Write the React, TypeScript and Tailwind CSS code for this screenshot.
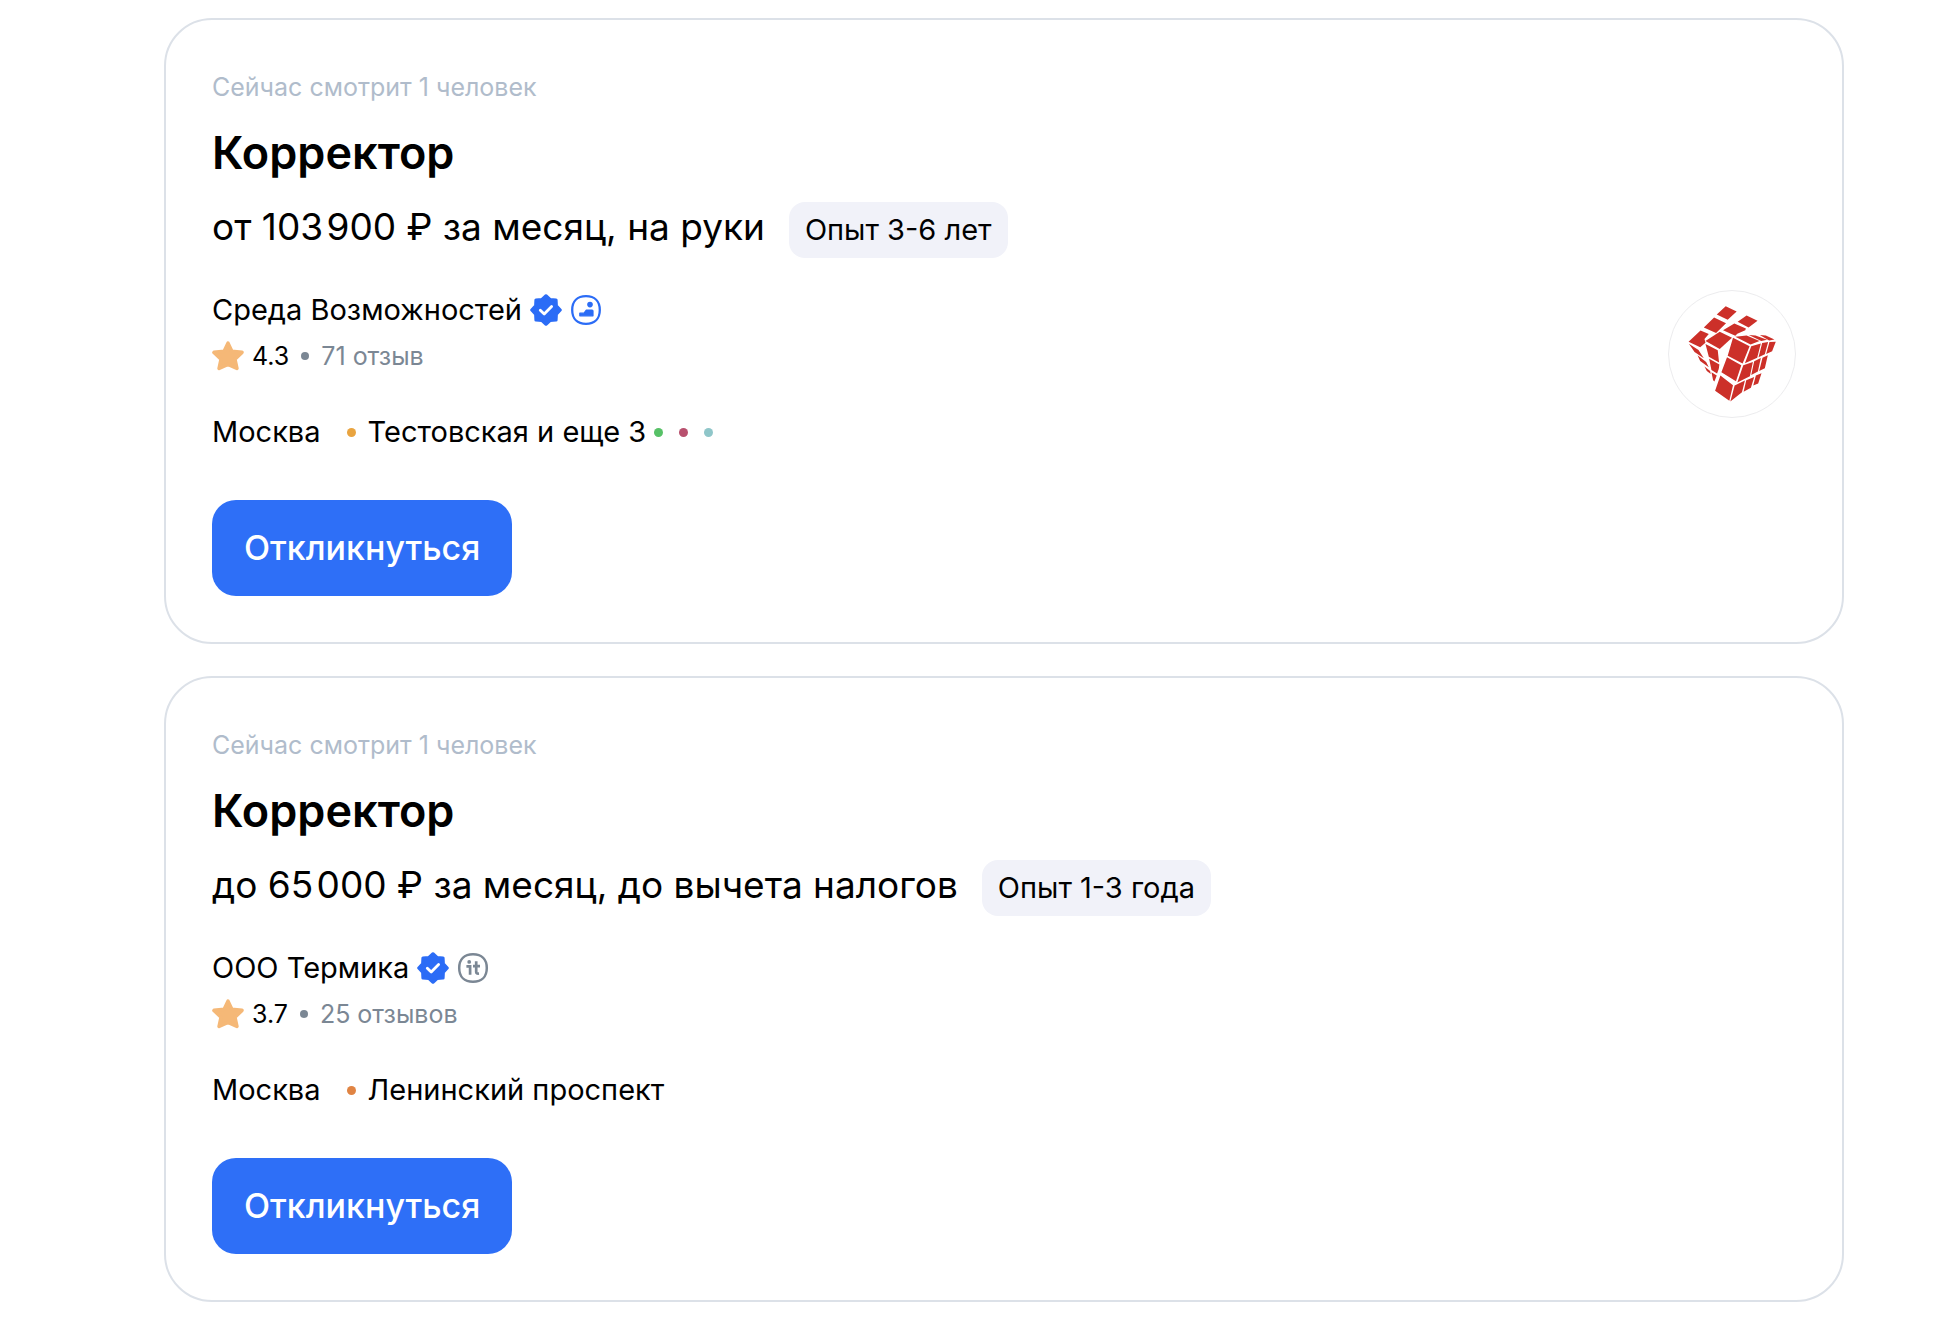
interface Vacancy {
  id: number
  viewers: string
  title: string
  salary: string
  experience: string
  company: string
  badge: 'career' | 'it'
  rating: string
  reviews: string
  city: string
  metro: string
  metroColor: string
  moreColors: string[]
  hasLogo: boolean
}

const vacancies: Vacancy[] = [
  {
    id: 1,
    viewers: 'Сейчас смотрит 1 человек',
    title: 'Корректор',
    salary: 'от 103\u200A900 ₽ за месяц, на руки',
    experience: 'Опыт 3-6 лет',
    company: 'Среда Возможностей',
    badge: 'career',
    rating: '4.3',
    reviews: '71 отзыв',
    city: 'Москва',
    metro: 'Тестовская и еще 3',
    metroColor: 'bg-[#e9a440]',
    moreColors: ['bg-[#57c167]', 'bg-[#b8506e]', 'bg-[#8fc6c9]'],
    hasLogo: true,
  },
  {
    id: 2,
    viewers: 'Сейчас смотрит 1 человек',
    title: 'Корректор',
    salary: 'до 65\u200A000 ₽ за месяц, до вычета налогов',
    experience: 'Опыт 1-3 года',
    company: 'ООО Термика',
    badge: 'it',
    rating: '3.7',
    reviews: '25 отзывов',
    city: 'Москва',
    metro: 'Ленинский проспект',
    metroColor: 'bg-[#e08443]',
    moreColors: [],
    hasLogo: false,
  },
]

function VerifiedIcon() {
  return (
    <svg viewBox="0 0 32 32" className="size-8 shrink-0" aria-hidden="true">
      <path
        fill="#2b6cf6"
        stroke="#2b6cf6"
        strokeWidth="3"
        strokeLinejoin="round"
        d="M16 1.7 20.3 5.6 26.1 5.9 26.4 11.7 30.3 16 26.4 20.3 26.1 26.1 20.3 26.4 16 30.3 11.7 26.4 5.9 26.1 5.6 20.3 1.7 16 5.6 11.7 5.9 5.9 11.7 5.6Z"
      />
      <path
        fill="none"
        stroke="#fff"
        strokeWidth="2.8"
        strokeLinecap="round"
        strokeLinejoin="round"
        d="m10.3 16.2 3.9 3.9 7.4-7.6"
      />
    </svg>
  )
}

function CareerIcon() {
  return (
    <svg viewBox="0 0 32 32" className="size-8 shrink-0" aria-hidden="true">
      <path
        fill="none"
        stroke="#2b6cf6"
        strokeWidth="2.3"
        d="M16 2.2c8.6 0 13.8 5.2 13.8 13.8S24.6 29.8 16 29.8 2.2 24.6 2.2 16 7.4 2.2 16 2.2Z"
      />
      <circle cx="20" cy="10.6" r="2.8" fill="#2b6cf6" />
      <path
        fill="#2b6cf6"
        stroke="#2b6cf6"
        strokeWidth="1.2"
        strokeLinejoin="round"
        d="M9.8 19.2h4.2l2.3-3.1h5.8c.6 0 .9.300.9.900v4.800H9.800Z"
      />
    </svg>
  )
}

function ItIcon() {
  return (
    <svg viewBox="0 0 32 32" className="size-8 shrink-0" fill="none" stroke="#7b8794" aria-hidden="true">
      <path
        strokeWidth="2.5"
        d="M16 2.2c8.6 0 13.8 5.2 13.8 13.8S24.6 29.8 16 29.8 2.2 24.6 2.2 16 7.4 2.2 16 2.2Z"
      />
      <circle cx="12.2" cy="9.9" r="1.9" fill="#7b8794" stroke="none" />
      <path strokeWidth="2.7" d="M9.4 14.4h3.7v8.4M16 14.2h7M19.2 9.200v10.800c0 1.300.7 1.700 2.800 1.500" />
    </svg>
  )
}

function StarIcon() {
  return (
    <svg viewBox="0 0 32 32" className="size-8 shrink-0" aria-hidden="true">
      <path
        fill="#f5b877"
        stroke="#f5b877"
        strokeWidth="3.6"
        strokeLinejoin="round"
        d="M16 3.2 19.8 11.2 30 12.4 22.9 19.2 24.9 28.4 16 24.4 7.1 28.4 9.1 19.2 2 12.4 12.2 11.2Z"
      />
    </svg>
  )
}

function CubeLogo() {
  return (
    <div className="size-32 shrink-0 overflow-hidden rounded-full border border-[#ececee]">
      <svg viewBox="56 61 380 380" className="size-full" fill="#cc3029" role="img" aria-label="Среда Возможностей">
        {/* back slice of the top face */}
        <path d="M227 107 260 123 233 148 200 132ZM192 141 228 158 198 188 161 171ZM151 180 176 191 163 206 166 217 150 231 115 214Z" />
        <path d="M290 135 323 151 296 171 263 154ZM253 159 288 174 286 179 262 190 256 196 219 179Z" />
        <path d="M209 184 246 202 209 236 166 212Z" />
        {/* left side */}
        <path d="M116 220 145 239 161 264 133 245ZM142 255 168 275 176 291 150 272ZM163 289 180 302 182 311 170 302Z" />
        <path d="M166 221 203 240 207 277 176 259ZM177 265 208 283 206 296 201 310 184 299ZM184 306 200 316 193 334 189 330Z" />
        {/* front face */}
        <path d="M249 202 299 228 278 280 233 256ZM231 261 274 285 258 333 214 306ZM211 316 249 345 238 392 195 362Z" />
        {/* right face */}
        <path d="M304 228 333 219 322 262 285 279ZM337 218 355 215 345 252 326 261ZM359 215 378 214 367 243 349 251Z" />
        <path d="M280 285 309 275 300 318 262 337ZM313 273 333 263 324 304 304 314ZM338 262 354 255 345 294 328 302Z" />
        <path d="M254 346 285 331 276 366 241 394ZM289 330 313 320 303 353 281 365ZM318 316 335 309 325 340 310 346Z" />
        {/* front slice of the top face */}
        <path d="M256 199 290 195 329 212 302 222ZM297 194 317 195 352 208 334 212ZM330 194 348 195 374 207 358 210Z" />
      </svg>
    </div>
  )
}

function VacancyCard({ vacancy }: { vacancy: Vacancy }) {
  return (
    <article className="flex flex-col items-start rounded-[48px] border-2 border-[#dce1e8] bg-white px-[46px] pt-[47px] pb-[46px]">
      <p className="text-[25px] leading-[40px] text-[#b0bccb]">{vacancy.viewers}</p>

      <h2 className="mt-4 text-[45px] leading-[60px] font-semibold">
        <a href="#">{vacancy.title}</a>
      </h2>

      <div className="mt-4 flex items-baseline gap-6">
        <span className="text-[37px] leading-[56px]">{vacancy.salary}</span>
        <span className="rounded-2xl bg-[#f1f2f9] px-4 text-[29px] leading-[56px]">{vacancy.experience}</span>
      </div>

      <div className="mt-8 flex w-full items-start justify-between">
        <div>
          <div className="flex items-center gap-2">
            <a href="#" className="text-[29px] leading-[40px]">{vacancy.company}</a>
            <VerifiedIcon />
            {vacancy.badge === 'career' ? <CareerIcon /> : <ItIcon />}
          </div>
          <div className="mt-1.5 flex items-center gap-2 text-[25px] leading-[40px]">
            <StarIcon />
            <span>{vacancy.rating}</span>
            <span className="mx-1 size-2 rounded-full bg-[#7b8794]" />
            <a href="#" className="text-[#7b8794]">{vacancy.reviews}</a>
          </div>
          <div className="mt-9 flex items-center text-[29px] leading-[40px]">
            <span>{vacancy.city}</span>
            <span className={`mr-3 ml-[26px] size-[9px] rounded-full ${vacancy.metroColor}`} />
            <span>{vacancy.metro}</span>
            <span className="ml-2 flex gap-4">
              {vacancy.moreColors.map((color) => (
                <span key={color} className={`size-[9px] rounded-full ${color}`} />
              ))}
            </span>
          </div>
        </div>
        {vacancy.hasLogo && <CubeLogo />}
      </div>

      <button
        type="button"
        className="mt-12 h-24 cursor-pointer rounded-3xl bg-[#2e6ff7] px-8 text-[34px] leading-[40px] font-medium text-white"
      >
        Откликнуться
      </button>
    </article>
  )
}

export default function App() {
  return (
    <main className="flex flex-col gap-8 bg-white pt-[18px] pr-[102px] pb-5 pl-[164px] font-['Inter',sans-serif] text-black">
      {vacancies.map((vacancy) => (
        <VacancyCard key={vacancy.id} vacancy={vacancy} />
      ))}
    </main>
  )
}
